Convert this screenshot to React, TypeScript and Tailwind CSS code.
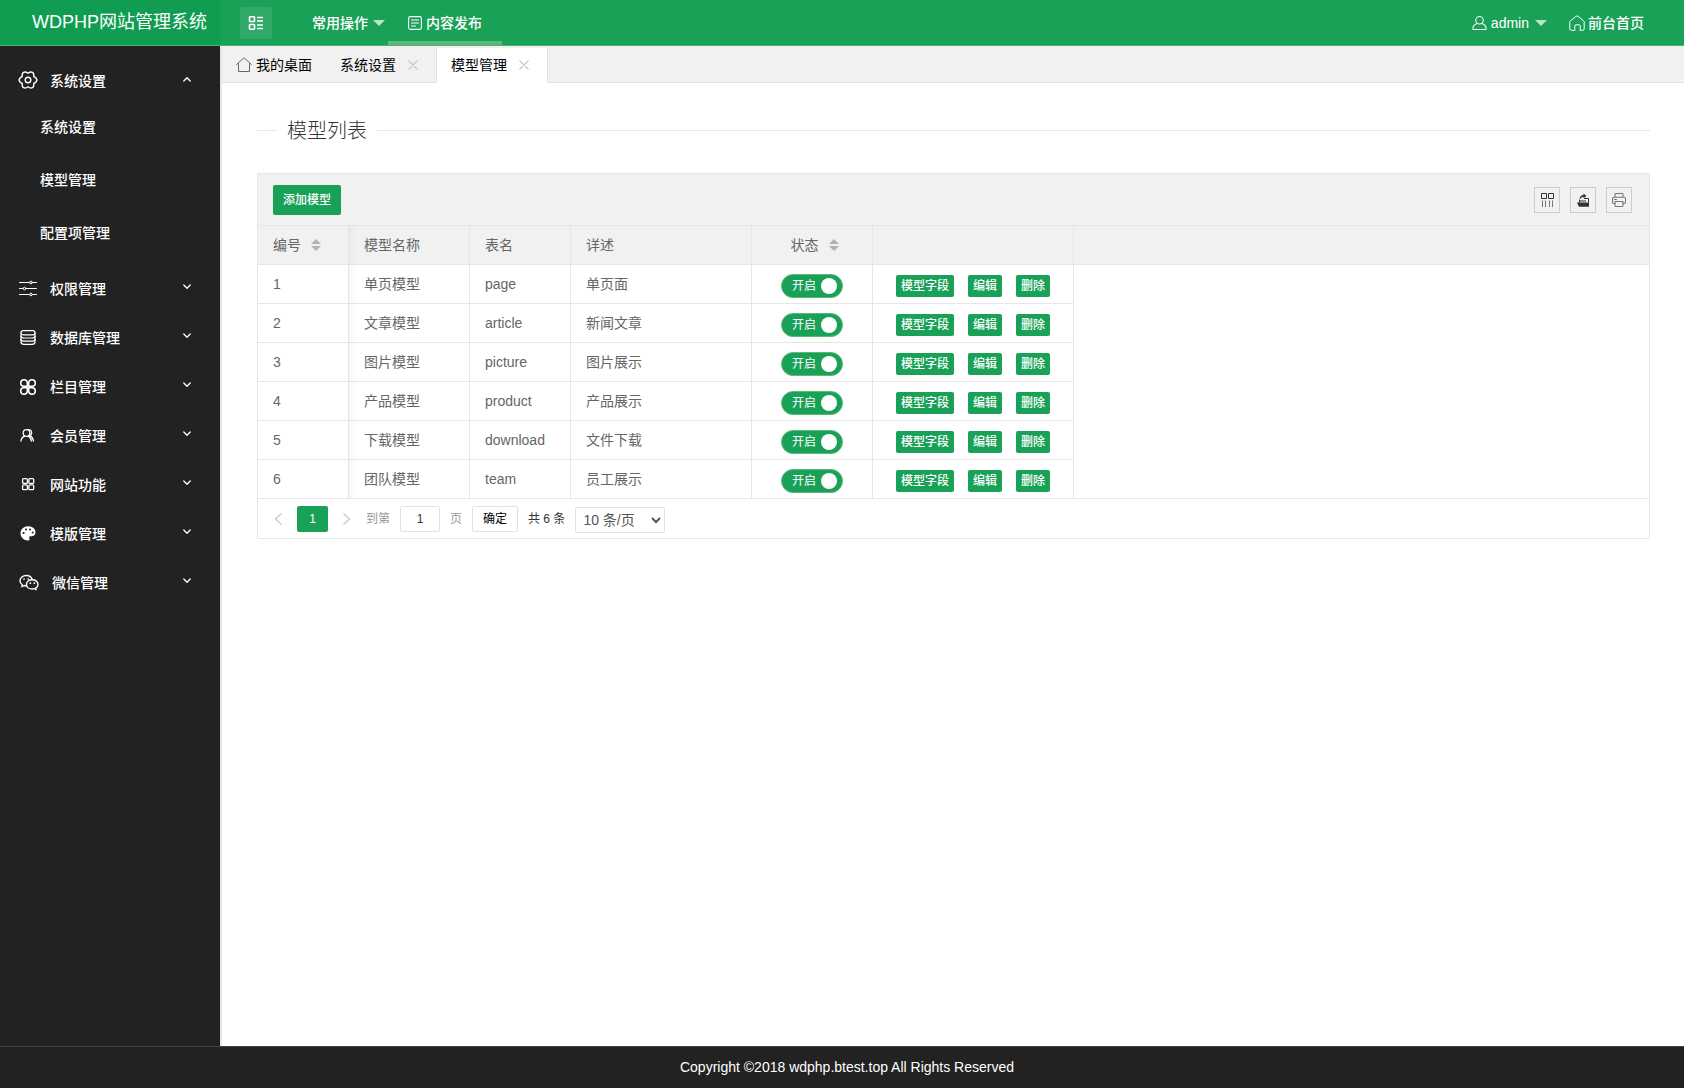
import React, { useState } from "react";

type IconProps = { className?: string };

const stroke = {
  fill: "none",
  stroke: "currentColor",
  strokeLinecap: "round" as const,
  strokeLinejoin: "round" as const,
};

const GearIcon = ({ className }: IconProps) => (
  <svg className={className} viewBox="0 0 18 18" overflow="visible" {...stroke} strokeWidth="1.4">
    <path d="M9 2.300C12.400-.4 15.400 1.300 14.800 5.650C18.850 7.260 18.850 10.740 14.800 12.350C15.400 16.700 12.400 18.400 9 15.700C5.600 18.400 2.600 16.700 3.200 12.350C-.85 10.740-.85 7.260 3.200 5.650C2.600 1.300 5.600-.4 9 2.300z" />
    <circle cx="9" cy="9" r="2.800" />
  </svg>
);

const SlidersIcon = ({ className }: IconProps) => (
  <svg className={className} viewBox="0 0 18 18" {...stroke} strokeWidth="1">
    <path d="M.5 2.500h10M13.500 2.500h4M.5 8.500h3.500M7 8.500h10.500M.5 14.500h10M13.500 14.500h4" />
    <circle cx="12" cy="2.500" r="1.300" />
    <circle cx="5.500" cy="8.500" r="1.300" />
    <circle cx="12" cy="14.500" r="1.300" />
  </svg>
);

const DatabaseIcon = ({ className }: IconProps) => (
  <svg className={className} viewBox="0 0 18 18" {...stroke} strokeWidth="1.200">
    <rect x="2" y="1.600" width="14" height="4.200" rx="2.100" />
    <path d="M2 4v9c0 1.500 1.300 2.300 3 2.300h8c1.700 0 3-.8 3-2.300V4" />
    <path d="M2 7c0 1.300 1.500 2 3 2h8c1.500 0 3-.7 3-2M2 10.200c0 1.300 1.500 2 3 2h8c1.500 0 3-.7 3-2" />
  </svg>
);

const CloverIcon = ({ className }: IconProps) => (
  <svg className={className} viewBox="0 0 18 18" {...stroke} strokeWidth="1.500">
    <path d="M8.300 8.300H4.900A3.300 3.300 0 1 1 8.300 4.900zM9.700 8.300h3.400A3.300 3.300 0 1 0 9.700 4.900zM8.300 9.700H4.900a3.300 3.300 0 1 0 3.400 3.400zM9.700 9.700h3.400a3.300 3.300 0 1 1-3.400 3.400z" />
  </svg>
);

const MembersIcon = ({ className }: IconProps) => (
  <svg className={className} viewBox="0 0 18 18" {...stroke} strokeWidth="1.300">
    <circle cx="7.500" cy="6" r="3.300" />
    <path d="M2 14c.2-2.600 1.800-4.200 3.700-4.900M9.300 9.100c1.600.8 2.700 2.200 3 4.900M9 2.700c2-.5 3.700.9 3.700 3 0 1.400-.8 2.500-1.900 3 2 .8 3.200 2.300 3.600 5.300" />
  </svg>
);

const GridIcon = ({ className }: IconProps) => (
  <svg className={className} viewBox="0 0 18 18" {...stroke} strokeWidth="1.300">
    <rect x="3.600" y="2.600" width="4.800" height="4.800" rx="1" />
    <rect x="9.900" y="2.600" width="4.800" height="4.800" rx="1" />
    <rect x="3.600" y="8.900" width="4.800" height="4.800" rx="1" />
    <rect x="9.900" y="8.900" width="4.800" height="4.800" rx="1" />
  </svg>
);

const PaletteIcon = ({ className }: IconProps) => (
  <svg className={className} viewBox="0 0 18 18" fill="currentColor" fillRule="evenodd">
    <path d="M9 1.300c4.300 0 7.500 2.500 7.500 6 0 2.600-1.800 4-4 4-1.600 0-2.400.4-2.400 1.300 0 .8.4 1.100.4 1.800 0 .7-.6 1.100-1.500 1.100C4.800 15.500 1.500 12.300 1.500 8.300S4.800 1.300 9 1.300zM4.600 6.900a1.100 1.100 0 1 0 0 2.200 1.100 1.100 0 0 0 0-2.200zM7 3.500a1 1 0 1 0 0 2 1 1 0 0 0 0-2zm4 0a1 1 0 1 0 0 2 1 1 0 0 0 0-2zm2.700 2.900a1 1 0 1 0 0 2 1 1 0 0 0 0-2z" />
  </svg>
);

const WechatIcon = ({ className }: IconProps) => (
  <svg className={className} viewBox="0 0 20 18" {...stroke} strokeWidth="1.400">
    <path d="M13.200 5.700C12.600 3.100 10.300 1.500 7.300 1.500 3.800 1.500 1 3.700 1 6.700c0 1.700.9 3.100 2.300 4.100l-.5 1.900 2.300-1.200c.7.200 1.400.3 2.100.3" />
    <path d="M13.300 5.800c-3.300 0-5.800 2-5.800 4.600s2.500 4.600 5.800 4.600c.7 0 1.300-.1 1.900-.3l1.900 1-.4-1.700c1.400-.8 2.300-2.100 2.300-3.600 0-2.600-2.500-4.600-5.700-4.600z" />
    <path d="M5 5h.1M9.300 5h.1M11.300 9.200h.1M15.300 9.200h.1" strokeWidth="1.700" />
  </svg>
);

const HomeIcon = ({ className }: IconProps) => (
  <svg className={className} viewBox="0 0 16 16" {...stroke} strokeWidth="1">
    <path d="M.6 7.500 8 .8l7.400 6.700M2.500 6.500v8h11v-8" />
  </svg>
);

const FrontIcon = ({ className }: IconProps) => (
  <svg className={className} viewBox="0 0 16 16" {...stroke} strokeWidth="1">
    <path d="M2.300 15.300a1.500 1.500 0 0 1-1.500-1.500V7.200c0-.6.200-1 .7-1.400L7 1.300a1.600 1.600 0 0 1 2 0l5.500 4.500c.5.400.7.800.7 1.400v6.600a1.500 1.500 0 0 1-1.500 1.500h-2.500v-4.500c0-.7-.4-1-1-1H6.800c-.6 0-1 .3-1 1v4.500z" />
  </svg>
);

const UserIcon = ({ className }: IconProps) => (
  <svg className={className} viewBox="0 0 16 16" {...stroke} strokeWidth="1.100">
    <circle cx="8" cy="5" r="4" />
    <path d="M5.500 8.500C2.500 9.500.9 11.700.9 14.200c0 .5.3.8.8.8h12.600c.5 0 .8-.3.8-.8 0-2.500-1.600-4.700-4.600-5.700" />
  </svg>
);

const NoteIcon = ({ className }: IconProps) => (
  <svg className={className} viewBox="0 0 14 14" {...stroke} strokeWidth="1.100">
    <rect x=".6" y=".6" width="12.800" height="12.800" rx="1.800" />
    <path d="M3.500 4h7M3.500 7h7M3.500 10h4" />
  </svg>
);

const MenuIcon = ({ className }: IconProps) => (
  <svg className={className} viewBox="0 0 16 14" {...stroke} strokeLinecap="butt" strokeWidth="1.600">
    <rect x="1.500" y=".8" width="5" height="4.700" rx=".6" />
    <rect x="1.500" y="8.500" width="5" height="4.700" rx=".6" />
    <path d="M9 1.500h6M9 5h6M9 9h6M9 12.500h6" strokeWidth="1.500" />
  </svg>
);

const ColumnsIcon = ({ className }: IconProps) => (
  <svg className={className} viewBox="0 0 14 14" {...stroke} strokeLinecap="butt" strokeLinejoin="miter" strokeWidth="1">
    <path d="M1.500.5h5v5h-5zM8.500.5h5v5h-5z" />
    <path d="M2.500 7.500V14M5.500 7.500V14M9.500 7.500V14M12.500 7.500V14" stroke="#777" />
  </svg>
);

const ExportIcon = ({ className }: IconProps) => (
  <svg className={className} viewBox="0 0 14 14" fill="currentColor">
    <path d="M1 9.500h12v4.300H3z" />
    <path d="M3.500 6.500v3M8 5.500h4.500v4M4 8h6" fill="none" stroke="currentColor" />
    <path d="M3.500 5.500C4 3.300 5.500 2 7.500 2V.5L10.500 3l-3 2.300V3.700C6 3.700 5.200 4.500 5 5.500z" />
  </svg>
);

const PrinterIcon = ({ className }: IconProps) => (
  <svg className={className} viewBox="0 0 14 14" {...stroke} strokeWidth="1.100">
    <path d="M3 4V1.500C3 .9 3.400.5 4 .5h6c.6 0 1 .4 1 1V4M3 10.500H1.800C1 10.500.5 10 .5 9.200V5.800C.5 4.800 1 4.200 2 4.200h10c1 0 1.500.6 1.500 1.600v3.400c0 .8-.5 1.300-1.300 1.300H11" />
    <path d="M3 8.500h8v4c0 .6-.4 1-1 1H4c-.6 0-1-.4-1-1zM2.500 6.500h2" />
  </svg>
);

const Chevron = ({ className }: IconProps) => (
  <svg className={className} viewBox="0 0 8 6" {...stroke} strokeWidth="1.300">
    <path d="m.8 1 3.200 3.300L7.200 1" />
  </svg>
);

const Arrow = ({ className }: IconProps) => (
  <svg className={className} viewBox="0 0 8 12" {...stroke} strokeWidth="1.500">
    <path d="M7 1 1.500 6 7 11" />
  </svg>
);

const CloseIcon = ({ className }: IconProps) => (
  <svg className={className} viewBox="0 0 10 10" {...stroke} strokeWidth="1.200">
    <path d="m.8.8 8.400 8.400M9.200.8.8 9.200" />
  </svg>
);

const Caret = () => <span className="border-x-6 border-t-6 border-x-transparent border-t-white/70" />;

const SortMarks = () => (
  <span className="flex flex-col gap-[2px]">
    <span className="border-x-5 border-b-5 border-x-transparent border-b-[#b2b2b2]" />
    <span className="border-x-5 border-t-5 border-x-transparent border-t-[#b2b2b2]" />
  </span>
);

const sections = [
  { label: "权限管理", Icon: SlidersIcon },
  { label: "数据库管理", Icon: DatabaseIcon },
  { label: "栏目管理", Icon: CloverIcon },
  { label: "会员管理", Icon: MembersIcon },
  { label: "网站功能", Icon: GridIcon },
  { label: "模版管理", Icon: PaletteIcon },
  { label: "微信管理", Icon: WechatIcon },
];

const rows = [
  { id: 1, name: "单页模型", table: "page", note: "单页面" },
  { id: 2, name: "文章模型", table: "article", note: "新闻文章" },
  { id: 3, name: "图片模型", table: "picture", note: "图片展示" },
  { id: 4, name: "产品模型", table: "product", note: "产品展示" },
  { id: 5, name: "下载模型", table: "download", note: "文件下载" },
  { id: 6, name: "团队模型", table: "team", note: "员工展示" },
];

function Header() {
  return (
    <header className="flex h-[46px] shrink-0 border-b border-[#47b37a] bg-[#1aa158] text-white">
      <h1 className="flex w-[220px] shrink-0 items-center bg-[#109d52] pb-[2px] pl-8 text-lg font-normal whitespace-nowrap">
        WDPHP网站管理系统
      </h1>
      <button aria-label="收起菜单" className="mt-[7px] ml-5 flex h-8 w-8 items-center justify-center rounded-xs bg-white/10">
        <MenuIcon className="h-[14px] w-4" />
      </button>
      <nav className="ml-10 flex font-medium">
        <a href="#common" className="flex items-center gap-[5px]">
          常用操作
          <Caret />
        </a>
        <a href="#publish" className="ml-[3px] flex border-b-4 border-[#5fb878] px-5 pt-1">
          <span className="flex items-center gap-1">
            <NoteIcon className="size-[14px]" />
            内容发布
          </span>
        </a>
      </nav>
      <nav className="mr-10 ml-auto flex items-center gap-[22px] font-medium">
        <a href="#admin" className="flex items-center gap-1">
          <UserIcon className="h-4 w-[15px]" />
          admin
          <span className="ml-[2px] flex">
            <Caret />
          </span>
        </a>
        <a href="#home" className="flex items-center gap-[3px]">
          <FrontIcon className="size-4" />
          前台首页
        </a>
      </nav>
    </header>
  );
}

function Sidebar() {
  return (
    <aside className="w-[222px] shrink-0 border-r-2 border-[#e6e6e6] bg-[#222] pt-[11px] font-medium text-white">
      <button className="flex h-12 w-full items-center pr-[29px] pl-[19px]">
        <GearIcon className="mb-[2px] size-[18px]" />
        <span className="ml-[13px]">系统设置</span>
        <Chevron className="mb-1 ml-auto h-[6px] w-2 rotate-180" />
      </button>
      <ul>
        {["系统设置", "模型管理", "配置项管理"].map((label) => (
          <li key={label}>
            <a href="#sub" className="flex h-[53px] items-center pb-[9px] pl-10">
              {label}
            </a>
          </li>
        ))}
      </ul>
      {sections.map(({ label, Icon }) => (
        <button key={label} className="flex h-[49px] w-full items-center pr-[29px] pl-[19px]">
          <Icon className="h-[18px] min-w-[18px]" />
          <span className="ml-[13px]">{label}</span>
          <Chevron className="mb-1 ml-auto h-[6px] w-2" />
        </button>
      ))}
    </aside>
  );
}

function TabBar() {
  return (
    <nav className="flex h-[37px] border-b border-[#e2e2e2] bg-[#f1f1f1] pt-[2px] text-black">
      <a href="#desk" className="flex items-center gap-1 px-[14px]">
        <HomeIcon className="size-4 text-[#666]" />
        我的桌面
      </a>
      <a href="#settings" className="flex items-center px-[14px]">
        系统设置
        <CloseIcon className="mr-1 ml-3 size-[10px] text-[#c2c2c2]" />
      </a>
      <a href="#models" className="-mb-px flex items-center border-r border-l border-[#e2e2e2] bg-white px-[14px] pb-px">
        模型管理
        <CloseIcon className="mr-1 ml-3 size-[10px] text-[#c2c2c2]" />
      </a>
    </nav>
  );
}

function StatusSwitch({ name }: { name: string }) {
  const [on, setOn] = useState(true);
  return (
    <label className="relative flex h-6 w-[62px] cursor-pointer items-center rounded-full border border-[#5fb878] bg-[#1aa158] pr-[5px] pl-[10px] text-xs text-white">
      <input
        type="checkbox"
        aria-label={name}
        checked={on}
        onChange={() => setOn(!on)}
        className="absolute inset-0 cursor-pointer appearance-none"
      />
      {on ? "开启" : "关闭"}
      <span className="ml-auto size-4 rounded-full bg-white" />
    </label>
  );
}

function ModelTable() {
  const th = "border-r border-b border-[#e6e6e6] px-[15px] text-left font-normal";
  const td = "border-r border-b border-[#e6e6e6] px-[15px]";
  const fade = " shadow-[inset_8px_0_8px_-8px_rgba(0,0,0,0.08)]";
  return (
    <table className="w-full table-fixed border-separate border-spacing-0 text-[#666]">
      <colgroup>
        <col className="w-[91px]" />
        <col className="w-[121px]" />
        <col className="w-[101px]" />
        <col className="w-[181px]" />
        <col className="w-[121px]" />
        <col className="w-[201px]" />
        <col />
      </colgroup>
      <thead className="bg-[#f1f1f1]">
        <tr className="h-[39px]">
          <th className={th}>
            <span className="flex items-center gap-[10px]">
              编号
              <SortMarks />
            </span>
          </th>
          <th className={th + fade}>模型名称</th>
          <th className={th}>表名</th>
          <th className={th}>详述</th>
          <th className={th}>
            <span className="flex items-center justify-center gap-[10px] pl-[5px]">
              状态
              <SortMarks />
            </span>
          </th>
          <th className={th} />
          <th className="border-b border-[#e6e6e6]" />
        </tr>
      </thead>
      <tbody>
        {rows.map((row, i) => (
          <tr key={row.id} className="h-[39px]">
            <td className={td}>{row.id}</td>
            <td className={td + fade}>{row.name}</td>
            <td className={td}>{row.table}</td>
            <td className={td}>{row.note}</td>
            <td className={td}>
              <div className="flex justify-center pt-1">
                <StatusSwitch name={row.name} />
              </div>
            </td>
            <td className={td}>
              <div className="flex justify-center gap-[14px] pt-1">
                {["模型字段", "编辑", "删除"].map((action) => (
                  <button key={action} className="h-[22px] rounded-xs bg-[#1aa158] px-[5px] text-xs font-medium whitespace-nowrap text-white">
                    {action}
                  </button>
                ))}
              </div>
            </td>
            {i === 0 && <td rowSpan={rows.length} className="border-b border-[#e6e6e6]" />}
          </tr>
        ))}
      </tbody>
    </table>
  );
}

function Pager() {
  return (
    <div className="flex h-[39px] items-center pl-4 text-xs text-[#999]">
      <button aria-label="上一页" className="text-[#ccc]">
        <Arrow className="h-3 w-2" />
      </button>
      <button className="ml-[15px] h-[26px] w-[31px] rounded-xs bg-[#1aa158] font-medium text-white">1</button>
      <button aria-label="下一页" className="ml-[15px] text-[#ccc]">
        <Arrow className="h-3 w-2 rotate-180" />
      </button>
      <label htmlFor="page" className="ml-[15px]">
        到第
      </label>
      <input id="page" defaultValue="1" className="mx-[10px] h-[26px] w-10 rounded-xs border border-[#e2e2e2] text-center text-[#333]" />
      页
      <button className="ml-[10px] h-[26px] w-[46px] rounded-xs border border-[#e2e2e2] text-black">确定</button>
      <span className="ml-[10px] text-[#333]">共 6 条</span>
      <select
        aria-label="每页条数"
        className="mt-[2px] ml-[10px] h-[26px] w-[90px] rounded-xs border border-[#e2e2e2] bg-white pl-[3px] text-sm text-[#555]"
      >
        <option>10 条/页</option>
        <option>20 条/页</option>
      </select>
    </div>
  );
}

export default function App() {
  const tool = "flex size-[26px] items-center justify-center border border-[#ccc]";
  return (
    <div className="flex min-h-screen flex-col bg-white font-['Liberation_Sans','Noto_Sans_CJK_SC',sans-serif] text-sm">
      <Header />
      <div className="flex grow">
        <Sidebar />
        <div className="min-w-0 grow">
          <TabBar />
          <main className="px-[35px] pt-8 pr-[34px]">
            <div className="flex items-center gap-[10px]">
              <span className="w-5 border-t border-[#e6e6e6]" />
              <h2 className="pt-[2px] text-xl leading-7 font-light text-[#333]">模型列表</h2>
              <span className="grow border-t border-[#e6e6e6]" />
            </div>
            <section className="mt-7 border border-[#e6e6e6]">
              <div className="flex items-center gap-[10px] border-b border-[#e6e6e6] bg-[#f1f1f1] pt-[11px] pr-[17px] pb-[10px] pl-[15px] text-[#333]">
                <button className="mr-auto h-[30px] rounded-xs bg-[#1aa158] px-[10px] text-xs font-medium text-white">添加模型</button>
                <button aria-label="筛选列" className={tool}>
                  <ColumnsIcon className="size-[14px]" />
                </button>
                <button aria-label="导出" className={tool}>
                  <ExportIcon className="size-[14px]" />
                </button>
                <button aria-label="打印" className={tool}>
                  <PrinterIcon className="size-[14px] text-[#777]" />
                </button>
              </div>
              <ModelTable />
              <Pager />
            </section>
          </main>
        </div>
      </div>
      <footer className="flex h-[42px] shrink-0 items-center justify-center border-t border-[#444] bg-[#222] pb-[2px] pl-[10px] font-medium text-white">
        Copyright ©2018 wdphp.btest.top All Rights Reserved
      </footer>
    </div>
  );
}
